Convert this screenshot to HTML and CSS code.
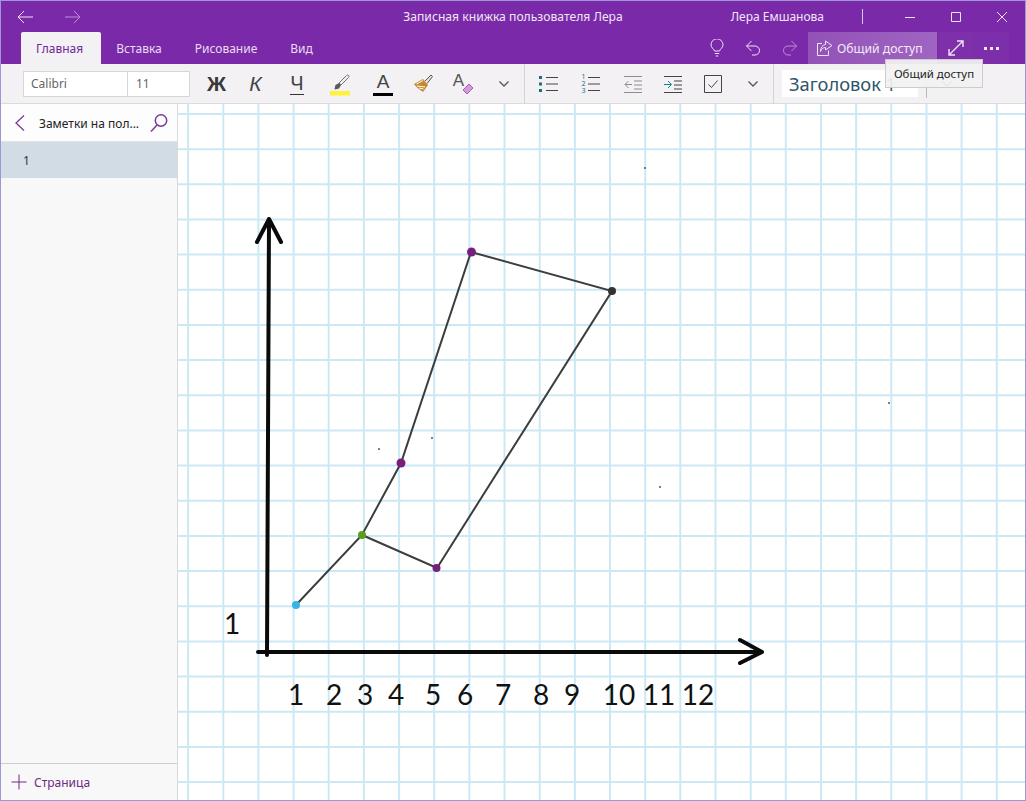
FILE: index.html
```html
<!DOCTYPE html>
<html lang="ru">
<head>
<meta charset="utf-8">
<title>Записная книжка пользователя Лера</title>
<link rel="stylesheet" href="styles.css">
</head>
<body>
<div class="window">
  <header class="titlebar">
    <div class="nav">
      <button class="nav-btn"><svg width="18" height="14" viewBox="0 0 18 14"><path d="M17 7H2M8 1 2 7l6 6"/></svg></button>
      <button class="nav-btn dim"><svg width="18" height="14" viewBox="0 0 18 14"><path d="M1 7h15M10 1l6 6-6 6"/></svg></button>
    </div>
    <div class="title">Записная книжка пользователя Лера</div>
    <div class="account">
      <span class="user">Лера Емшанова</span>
      <span class="sep"></span>
      <button class="cap"><svg width="12" height="12" viewBox="0 0 12 12"><path d="M1 6.500h10"/></svg></button>
      <button class="cap"><svg width="12" height="12" viewBox="0 0 12 12"><path d="M1.500 1.500h9v9h-9z"/></svg></button>
      <button class="cap"><svg width="12" height="12" viewBox="0 0 12 12"><path d="M1 1l10 10M11 1 1 11"/></svg></button>
    </div>
  </header>

  <div class="tabbar">
    <button class="tab active">Главная</button>
    <button class="tab">Вставка</button>
    <button class="tab">Рисование</button>
    <button class="tab">Вид</button>
    <div class="tab-actions">
      <button class="act"><svg width="14" height="18" viewBox="0 0 14 18"><path d="M4.500 12C4 10 1 8.800 1 5.800a6 6 0 0 1 12 0c0 3-3 4.200-3.500 6.200zM4.800 14.500h4.400M5.800 17h2.400"/></svg></button>
      <button class="act"><svg width="17" height="16" viewBox="0 0 17 16"><path d="M6.500 1 1.500 6l5 5M1.500 6H10a4.500 4.500 0 0 1 0 9H7"/></svg></button>
      <button class="act dim"><svg width="17" height="16" viewBox="0 0 17 16"><path d="M10.500 1l5 5-5 5M15.500 6H7a4.500 4.500 0 0 0 0 9h3"/></svg></button>
      <button class="share">
        <svg width="16" height="16" viewBox="0 0 16 16"><path d="M5 3.500H.5v12h11V10.500M8.500 1l6.500 4.500-6.500 4.500V7.500C6 7.500 4.500 9 3.500 11.500c0-4 2-6.500 5-7z"/></svg>
        <span>Общий доступ</span>
      </button>
      <button class="expand"><svg width="18" height="18" viewBox="0 0 18 18"><path d="M2 16 16 2M10 2h6v6M2 10v6h6"/></svg></button>
      <button class="more"><i></i><i></i><i></i></button>
    </div>
  </div>

  <div class="toolbar">
    <div class="fontbox">
      <span class="fontname">Calibri</span>
      <span class="fontsize">11</span>
    </div>
    <div class="tools">
      <button class="tool"><span class="t-bold">Ж</span></button>
      <button class="tool"><span class="t-ital">К</span></button>
      <button class="tool"><span class="t-under">Ч</span></button>
      <button class="tool">
        <svg width="24" height="24" viewBox="0 0 24 24"><path class="hl-body" d="M11 11 18.500 3.500c1.500-1.500 3.500.5 2 2L13 13z"/><path class="hl-tip" d="M6.500 17l1-4 3.500-2 2 2-2 3.500-4 1z"/><path class="hl-bar" d="M2 19h20v4.500H2z"/></svg>
      </button>
      <button class="tool"><span class="t-color">А</span></button>
      <button class="tool nudge-3">
        <svg width="22" height="22" viewBox="0 0 22 22"><path class="br-body" d="M2 11 11 6l5 6-5 7C8 17 4 14 2 11z"/><path class="br-line" d="M4.500 11 11 7.500M5 13l8 1M7 15l4.500 1"/><path class="br-handle" d="M13 8l6-6 1.500 1.500-5.500 7"/></svg>
      </button>
      <button class="tool">
        <span class="t-clear">А</span>
        <svg class="eraser" width="12" height="12" viewBox="0 0 12 12"><path d="M1 7l6-6 4 4-6 6z"/></svg>
      </button>
      <button class="tool small"><svg class="chev" width="12" height="8" viewBox="0 0 12 8"><path d="M1.500 1.500 6 6l4.500-4.500"/></svg></button>
    </div>
    <span class="vr"></span>
    <div class="tools lists">
      <button class="tool"><svg width="20" height="22" viewBox="0 0 20 22"><path class="teal-fill" d="M1 3h3v3H1zM1 9.500h3v3H1zM1 16h3v3H1z"/><path class="ink" d="M8 4.500h12M8 11h12M8 17.500h12"/></svg></button>
      <button class="tool nudge-5"><span class="numcol"><b>1</b><b>2</b><b>3</b></span><svg width="14" height="22" viewBox="0 0 14 22"><path class="ink" d="M1 4.500h12M1 11h12M1 17.500h12"/></svg></button>
      <button class="tool nudge-7"><svg width="18" height="20" viewBox="0 0 18 20"><path class="faded" d="M0 2.500h18M10 7h8M10 11h8M10 15h8M0 18.500h18M8 10.500H1M4.500 7 1 10.500 4.500 14"/></svg></button>
      <button class="tool nudge-5"><svg width="18" height="20" viewBox="0 0 18 20"><path class="ink" d="M0 2.500h18M10 7h8M10 11h8M10 15h8M0 18.500h18"/><path class="teal" d="M0 10.500h7M4 7l3.500 3.500L4 14"/></svg></button>
      <button class="tool nudge-3"><svg width="18" height="18" viewBox="0 0 18 18"><path class="ink" d="M.5.500h17v17H.5z"/><path class="ink" d="M4.500 9.500l3 3 6-7"/></svg></button>
      <button class="tool small"><svg class="chev" width="12" height="8" viewBox="0 0 12 8"><path d="M1.500 1.500 6 6l4.500-4.500"/></svg></button>
    </div>
    <span class="vr"></span>
    <div class="stylebox">Заголовок 1</div>
    <span class="stylesep"></span>
    <svg class="chev stylechev" width="12" height="8" viewBox="0 0 12 8"><path d="M1.500 1.500 6 6l4.500-4.500"/></svg>
  </div>

  <div class="main">
    <aside class="sidebar">
      <div class="side-head">
        <svg class="side-back" width="12" height="18" viewBox="0 0 12 18"><path d="M10 1.500 2 9l8 7.500"/></svg>
        <span class="side-title">Заметки на пол...</span>
        <svg class="side-search" width="20" height="20" viewBox="0 0 20 20"><circle cx="12" cy="7.500" r="5.700"/><path d="M8 12 2 18.500"/></svg>
      </div>
      <div class="page-row">1</div>
      <div class="side-fill"></div>
      <div class="side-foot">
        <svg width="16" height="16" viewBox="0 0 16 16"><path d="M8 .5v15M.5 8h15"/></svg>
        <span>Страница</span>
      </div>
    </aside>

    <div class="canvas">
      <svg class="sheet" width="847" height="696" viewBox="178 104 847 696">
        <path class="grid" d="M188.100 104V800M223.300 104V800M258.400 104V800M293.600 104V800M328.700 104V800M363.900 104V800M399.100 104V800M434.200 104V800M469.400 104V800M504.500 104V800M539.700 104V800M574.900 104V800M610 104V800M645.200 104V800M680.300 104V800M715.500 104V800M750.700 104V800M785.800 104V800M821 104V800M856.100 104V800M891.300 104V800M926.500 104V800M961.600 104V800M996.800 104V800"/>
        <path class="grid" d="M178 114H1025M178 149.200H1025M178 184.300H1025M178 219.500H1025M178 254.600H1025M178 289.800H1025M178 325H1025M178 360.100H1025M178 395.300H1025M178 430.400H1025M178 465.600H1025M178 500.800H1025M178 535.900H1025M178 571.100H1025M178 606.200H1025M178 641.400H1025M178 676.600H1025M178 711.700H1025M178 746.900H1025M178 782H1025"/>
        <path class="axis" d="M267 655 269 219M257 242 269 219 281 242M258 652H762M740 640 762 652 740 663"/>
        <path class="shape" d="M296 605 362 535 401 463 471 252 612 291 437 568 362 535"/>
        <circle class="dot-blue" cx="296" cy="605" r="4"/>
        <circle class="dot-green" cx="362" cy="535" r="4"/>
        <circle class="dot-purple" cx="401" cy="463" r="4.500"/>
        <circle class="dot-purple" cx="471.500" cy="252" r="4.500"/>
        <circle class="dot-dark" cx="612" cy="291" r="4"/>
        <circle class="dot-purple" cx="436.500" cy="568" r="4"/>
        <circle class="speck" cx="645" cy="168" r="1"/>
        <circle class="speck" cx="889" cy="403" r="1"/>
        <circle class="speck" cx="660" cy="487" r="1"/>
        <circle class="speck" cx="379" cy="449" r="1"/>
        <circle class="speck" cx="432" cy="438" r="1"/>
        <text class="num" x="232" y="634">1</text>
        <text class="num" x="296" y="705">1</text>
        <text class="num" x="334" y="705">2</text>
        <text class="num" x="365" y="705">3</text>
        <text class="num" x="396" y="705">4</text>
        <text class="num" x="433" y="705">5</text>
        <text class="num" x="465" y="705">6</text>
        <text class="num" x="503" y="705">7</text>
        <text class="num" x="541" y="705">8</text>
        <text class="num" x="572" y="705">9</text>
        <text class="num" x="619" y="705">10</text>
        <text class="num" x="659" y="705">11</text>
        <text class="num" x="698" y="705">12</text>
      </svg>
    </div>
  </div>

  <div class="tooltip">Общий доступ</div>
</div>
</body>
</html>
```

FILE: styles.css
```css
* { box-sizing: border-box; }
html, body { margin: 0; padding: 0; height: 100%; overflow: hidden; }
body { font-family: "Noto Sans", "Open Sans", sans-serif; font-size: 12px; color: #333; }
button { font: inherit; color: inherit; background: none; border: 0; padding: 0; margin: 0; display: flex; align-items: center; justify-content: center; }
svg { display: block; fill: none; }

.window { position: relative; width: 1026px; height: 801px; border: 1px solid #9d97d8; display: flex; flex-direction: column; background: #fff; overflow: hidden; }

/* title bar */
.titlebar { height: 31px; flex: none; background: #7a2aa9; color: #f1e6f6; display: grid; grid-template-columns: 1fr auto 1fr; align-items: center; }
.titlebar svg path, .tab-actions svg path { stroke: #efe4f5; stroke-width: 1; fill: none; }
.nav { display: flex; padding-left: 15px; gap: 30px; align-items: center; }
.nav-btn { width: 18px; height: 30px; }
.dim { opacity: .55; }
.title { font-size: 12.150px; text-align: center; }
.account { display: flex; justify-content: flex-end; align-items: center; height: 31px; }
.user { font-size: 12px; margin-right: 38px; }
.sep { width: 1px; height: 15px; background: #d9c3e6; margin-right: 24px; }
.cap { width: 46px; height: 31px; }

/* tabs */
.tabbar { height: 32px; flex: none; background: #7a2aa9; color: #e9dcf0; display: flex; padding-left: 20px; }
.tab { height: 32px; padding: 0 15px; font-size: 12px; margin-right: 3px; }
.tab.active { background: #f3f1f4; color: #6f2a96; border-radius: 2px 2px 0 0; padding: 0 18px 0 15px; margin-right: 0; }
.tab-actions { margin-left: auto; display: flex; padding-right: 16px; }
.act { width: 36px; height: 32px; }
.share { width: 129px; height: 32px; margin-left: 1px; gap: 4px; padding-left: 9px; justify-content: flex-start; background: linear-gradient(90deg, #9252b6, #a064c2); color: #f3eaf7; font-size: 12.200px; }
.expand { width: 35px; height: 32px; margin-left: 1px; background: #7e30ab; }
.tab-actions .expand path { stroke-width: 1.400; }
.more { width: 36px; height: 32px; gap: 3px; background: #7d2fab; }
.more i { width: 3px; height: 3px; background: #f3eaf7; }

/* toolbar */
.toolbar { height: 40px; flex: none; background: #f3f1f4; border-bottom: 1px solid #dcdadc; display: flex; align-items: center; padding-left: 22px; }
.fontbox { width: 167px; height: 26px; display: flex; background: #fff; border: 1px solid #d6d6d6; font-size: 12px; color: #666; }
.fontname { width: 104px; padding-left: 7px; border-right: 1px solid #d6d6d6; line-height: 24px; }
.fontsize { padding-left: 8px; line-height: 24px; }
.tools { display: flex; margin-left: 6px; }
.tool { width: 41px; height: 39px; position: relative; color: #444; }
.nudge-3 > svg { margin-left: 3px; }
.nudge-5 > :first-child { margin-left: 5px; }
.nudge-7 > svg { margin-left: 7px; }
.t-bold { font: bold 21px "Liberation Sans", sans-serif; color: #3a3a3a; }
.t-ital { font: italic 21px "Liberation Sans", sans-serif; color: #444; margin-left: -4px; }
.t-under { font: 20px "Liberation Sans", sans-serif; border-bottom: 1px solid #333; line-height: 21px; margin-left: -3px; }
.t-color { font: 19px "Liberation Sans", sans-serif; line-height: 22px; border-bottom: 3px solid #000; width: 20px; text-align: center; margin-left: 5px; }
.t-clear { font: 17px "Liberation Sans", sans-serif; margin: -6px 8px 0 0; color: #555; }
.hl-tip { fill: #59595b; }
.hl-body { fill: #eeeeee; stroke: #777; stroke-width: 1; }
.hl-bar { fill: #fff23a; }
.br-body { fill: #c8892e; }
.br-line { stroke: #fff; stroke-width: 1; }
.br-handle { fill: #e7e3dc; stroke: #555; stroke-width: 1; }
.eraser { position: absolute; left: 20px; top: 19px; }
.eraser path { fill: #d49ade; stroke: #a65cb8; stroke-width: 1; }
.chev path { stroke: #555; stroke-width: 1.300; }
.vr { width: 1px; height: 40px; background: #d4d2d4; }
.lists { margin-left: 2px; }
.ink { stroke: #444; stroke-width: 1; }
.faded { stroke: #8d8d8d; stroke-width: 1; }
.teal { stroke: #1c7f8a; stroke-width: 1; }
.teal-fill { fill: #1c6f7c; }
.numcol { display: flex; flex-direction: column; font-size: 7px; line-height: 7px; color: #1c6f7c; margin-right: 1px; }
.numcol b { font-weight: 400; }
.stylebox { width: 136px; height: 27px; margin-left: 8px; background: #fff; font-size: 18.300px; line-height: 27px; padding-left: 7px; color: #2f5568; white-space: nowrap; }
.stylesep { width: 1px; height: 17px; background: #bbb; margin: 11px 0 0 8px; }
.stylechev { margin-left: 14px; }

/* main */
.main { flex: 1; display: flex; min-height: 0; }
.sidebar { width: 177px; flex: none; background: #f9f8f9; border-right: 1px solid #dad9da; display: flex; flex-direction: column; }
.side-head { height: 37px; flex: none; background: #fdfdfd; display: flex; align-items: center; padding-left: 13px; box-shadow: 0 1px 1px #e3e3e3; position: relative; }
.side-back path { stroke: #7a3a9a; stroke-width: 1.300; }
.side-title { width: 111px; margin-left: 13px; padding-top: 2px; color: #222; font-size: 12px; white-space: nowrap; }
.side-search { margin-left: -1px; }
.side-search circle, .side-search path { stroke: #7a3a9a; stroke-width: 1.500; }
.page-row { height: 37px; flex: none; background: #d2dce4; padding: 1px 0 0 22px; line-height: 38px; color: #333; font-size: 12px; }
.side-fill { flex: 1; }
.side-foot { height: 37px; flex: none; border-top: 1px solid #cfcdd0; display: flex; align-items: center; padding-left: 10px; gap: 7px; color: #6c2a80; font-size: 12px; }
.side-foot path { stroke: #6c2a80; stroke-width: 1; }

/* canvas */
.canvas { flex: 1; min-width: 0; background: #fff; }
.grid { stroke: #cbe9f5; stroke-width: 2; fill: none; }
.axis { stroke: #0a0a0a; stroke-width: 4; fill: none; stroke-linecap: round; stroke-linejoin: round; }
.shape { stroke: #3d3d3d; stroke-width: 2; fill: none; }
.dot-blue { fill: #38b3e6; }
.dot-green { fill: #5a9e1e; }
.dot-purple { fill: #74207c; }
.dot-dark { fill: #333; }
.speck { fill: #555; }
.num { font-family: "Lato", sans-serif; font-size: 28px; fill: #111; text-anchor: middle; }

/* tooltip */
.tooltip { position: absolute; left: 884px; top: 58px; width: 98px; height: 29px; background: rgba(242,242,242,.93); border: 1px solid #cccccc; color: #222; font-size: 11.400px; line-height: 27px; text-align: center; white-space: nowrap; }
```
